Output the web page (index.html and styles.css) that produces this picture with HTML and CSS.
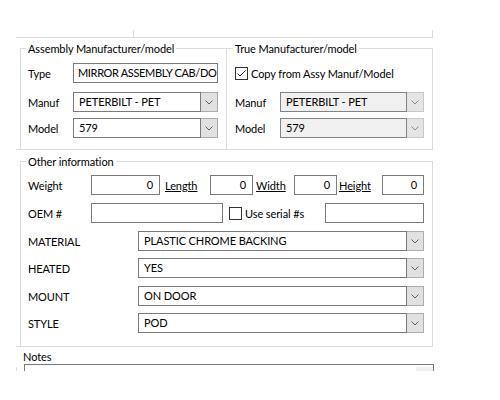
FILE: index.html
```html
<!DOCTYPE html>
<html>
<head>
<meta charset="utf-8">
<link rel="stylesheet" href="styles.css">
</head>
<body>
<div class="window">
  <div class="topbar"><div class="topbar-seg"></div></div>

  <div class="panel">
    <div class="group group-assy">
      <div class="legend">Assembly Manufacturer/model</div>
      <div class="row row-first">
        <span class="lbl lbl-45">Type</span>
        <div class="tb tb-type">MIRROR ASSEMBLY CAB/DO</div>
      </div>
      <div class="row row-manuf">
        <span class="lbl lbl-45">Manuf</span>
        <div class="combo combo-145">
          <div class="combo-text">PETERBILT - PET</div>
          <div class="combo-btn"><svg width="8" height="5" viewBox="0 0 8 5"><path d="M0.5 0.5 L4 4 L7.5 0.5" fill="none" stroke="#606060" stroke-width="1"/></svg></div>
        </div>
      </div>
      <div class="row row-model">
        <span class="lbl lbl-45">Model</span>
        <div class="combo combo-145">
          <div class="combo-text">579</div>
          <div class="combo-btn"><svg width="8" height="5" viewBox="0 0 8 5"><path d="M0.5 0.5 L4 4 L7.5 0.5" fill="none" stroke="#606060" stroke-width="1"/></svg></div>
        </div>
      </div>
    </div>

    <div class="group group-true">
      <div class="legend">True Manufacturer/model</div>
      <div class="row row-first">
        <span class="cb"><svg width="11" height="11" viewBox="0 0 11 11"><path d="M1.5 5.5 L4 8 L9.5 2.5" fill="none" stroke="#222" stroke-width="1"/></svg></span>
        <span class="cb-text">Copy from Assy Manuf/Model</span>
      </div>
      <div class="row row-manuf">
        <span class="lbl lbl-45">Manuf</span>
        <div class="combo combo-144 disabled">
          <div class="combo-text">PETERBILT - PET</div>
          <div class="combo-btn"><svg width="8" height="5" viewBox="0 0 8 5"><path d="M0.5 0.5 L4 4 L7.5 0.5" fill="none" stroke="#8a8a8a" stroke-width="1"/></svg></div>
        </div>
      </div>
      <div class="row row-model">
        <span class="lbl lbl-45">Model</span>
        <div class="combo combo-144 disabled">
          <div class="combo-text">579</div>
          <div class="combo-btn"><svg width="8" height="5" viewBox="0 0 8 5"><path d="M0.5 0.5 L4 4 L7.5 0.5" fill="none" stroke="#8a8a8a" stroke-width="1"/></svg></div>
        </div>
      </div>
    </div>
  </div>

  <div class="panel2">
    <div class="group group-other">
      <div class="legend">Other information</div>
      <div class="row row-weight">
        <span class="lbl lbl-63">Weight</span>
        <div class="tb num w-69">0</div>
        <span class="link l-length">Length</span>
        <div class="tb num w-43">0</div>
        <span class="link l-width">Width</span>
        <div class="tb num w-43">0</div>
        <span class="link l-height">Height</span>
        <div class="tb num w-42">0</div>
      </div>
      <div class="row row-gap8">
        <span class="lbl lbl-63">OEM #</span>
        <div class="tb w-132"></div>
        <span class="cb cb-serial"></span>
        <span class="cb-text">Use serial #s</span>
        <div class="tb w-99 push-right"></div>
      </div>
      <div class="row row-gap8">
        <span class="lbl lbl-110">MATERIAL</span>
        <div class="combo combo-286">
          <div class="combo-text">PLASTIC CHROME BACKING</div>
          <div class="combo-btn"><svg width="8" height="5" viewBox="0 0 8 5"><path d="M0.5 0.5 L4 4 L7.5 0.5" fill="none" stroke="#606060" stroke-width="1"/></svg></div>
        </div>
      </div>
      <div class="row row-gap7">
        <span class="lbl lbl-110">HEATED</span>
        <div class="combo combo-286">
          <div class="combo-text">YES</div>
          <div class="combo-btn"><svg width="8" height="5" viewBox="0 0 8 5"><path d="M0.5 0.5 L4 4 L7.5 0.5" fill="none" stroke="#606060" stroke-width="1"/></svg></div>
        </div>
      </div>
      <div class="row row-gap8">
        <span class="lbl lbl-110">MOUNT</span>
        <div class="combo combo-286">
          <div class="combo-text">ON DOOR</div>
          <div class="combo-btn"><svg width="8" height="5" viewBox="0 0 8 5"><path d="M0.5 0.5 L4 4 L7.5 0.5" fill="none" stroke="#606060" stroke-width="1"/></svg></div>
        </div>
      </div>
      <div class="row row-gap7">
        <span class="lbl lbl-110">STYLE</span>
        <div class="combo combo-286">
          <div class="combo-text">POD</div>
          <div class="combo-btn"><svg width="8" height="5" viewBox="0 0 8 5"><path d="M0.5 0.5 L4 4 L7.5 0.5" fill="none" stroke="#606060" stroke-width="1"/></svg></div>
        </div>
      </div>
    </div>
  </div>

  <div class="notes-label">Notes</div>
  <div class="notes-row">
    <div class="edge"></div>
    <div class="notes-box"><div class="scroll"></div></div>
  </div>
</div>
</body>
</html>
```

FILE: styles.css
```css
* { box-sizing: border-box; }
body {
  margin: 0;
  background: #fff;
  font-family: Lato, "Noto Sans", sans-serif;
  font-size: 11px;
  letter-spacing: -0.1px;
  color: #000;
}
.window { height: 371px; overflow: hidden; }

.topbar {
  margin: 30px 0 0 16px;
  width: 417px;
  height: 8px;
  border-right: 1px solid #dcdcdc;
  border-bottom: 1px solid #dcdcdc;
}
.topbar-seg { width: 118px; height: 7px; border-right: 1px solid #dcdcdc; }

.panel {
  display: flex;
  margin-left: 16px;
  width: 417px;
  padding: 10px 0 0 4px;
  border-bottom: 1px solid #dcdcdc;
}
.panel2 {
  margin-left: 16px;
  width: 417px;
  padding: 11px 0 0 4px;
  border-bottom: 1px solid #dcdcdc;
}

.group {
  border: 1px solid #dcdcdc;
  border-bottom: none;
}
.group-assy { width: 207px; height: 101px; padding: 0 8px 0 7px; }
.group-true { width: 206px; height: 101px; padding: 0 8px; border-left: none; }
.group-other { width: 413px; padding: 0 8px 13px 7px; }

.legend {
  display: block;
  width: max-content;
  margin: -8px 0 0 -2px;
  padding: 0 2px;
  line-height: 16px;
  background: #fff;
}

.row { display: flex; align-items: center; height: 20px; }
.row-first { margin-top: 6px; }
.row-manuf { margin-top: 9px; }
.row-model { margin-top: 6px; }
.row-weight { margin-top: 5px; }
.row-gap8 { margin-top: 8px; }
.row-gap7 { margin-top: 7px; }

.lbl { white-space: nowrap; }
.lbl-45 { width: 45px; }
.lbl-63 { width: 63px; }
.lbl-110 { width: 110px; }

.tb {
  height: 20px;
  border: 1px solid #7a7a7a;
  background: #fff;
  padding: 0 3px 0 4px;
  line-height: 18px;
  white-space: nowrap;
  overflow: hidden;
}
.tb-type { width: 145px; letter-spacing: -0.35px; padding: 0 1px 0 4px; }
.num { text-align: right; padding-right: 6px; }
.w-69 { width: 69px; }
.w-43 { width: 43px; }
.w-42 { width: 42px; }
.w-132 { width: 132px; }
.w-99 { width: 99px; }
.push-right { margin-left: auto; }

.link { text-decoration: underline; white-space: nowrap; }
.l-length { width: 45px; margin-left: 5px; }
.l-width { width: 38px; margin-left: 3px; }
.l-height { width: 43px; margin-left: 2px; }

.combo { display: flex; height: 20px; }
.combo-145 { width: 145px; }
.combo-144 { width: 144px; }
.combo-286 { width: 286px; }
.combo-text {
  flex: 1;
  border: 1px solid #7a7a7a;
  background: #fff;
  padding-left: 5px;
  line-height: 18px;
  white-space: nowrap;
  overflow: hidden;
}
.combo-btn {
  width: 17px;
  border: 1px solid #adadad;
  border-left: none;
  background: #e1e1e1;
  display: flex;
  align-items: center;
  justify-content: center;
}
.combo.disabled .combo-text { background: #f0f0f0; border-color: #838383; }
.combo.disabled .combo-btn { background: #e5e5e5; border-color: #c8c8c8; }

.cb {
  width: 13px;
  height: 13px;
  border: 1px solid #333;
  background: #fff;
  display: flex;
  align-items: center;
  justify-content: center;
  margin-right: 3px;
  flex: none;
}
.cb-serial { margin-left: 6px; }
.cb-text { white-space: nowrap; }

.notes-label { margin: 3px 0 0 23px; line-height: 14px; }
.notes-row { display: flex; margin-left: 16px; }
.edge { width: 8px; height: 20px; margin-top: 3px; border-left: 1px solid #dcdcdc; }
.notes-box {
  width: 410px;
  height: 40px;
  border: 1px solid #7a7a7a;
  border-bottom: none;
  display: flex;
  justify-content: flex-end;
}
.scroll { width: 17px; height: 20px; margin-top: 2px; background: #f0f0f0; }
```
